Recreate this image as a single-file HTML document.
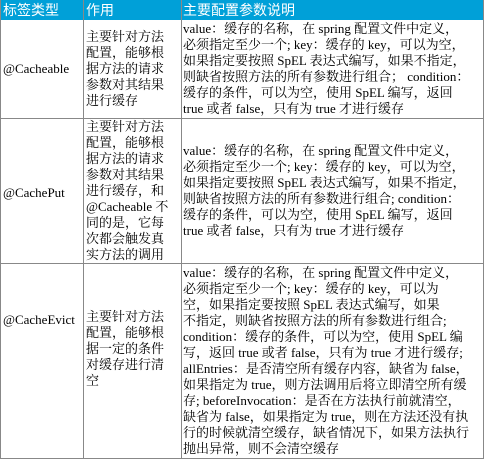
<!DOCTYPE html>
<html><head><meta charset="utf-8"><style>
body{margin:0;width:484px;height:460px;background:#fff;position:relative;overflow:hidden;font-family:"Liberation Serif","Noto Serif CJK SC",serif;font-size:13px;color:#000}
.h{position:absolute;top:0;left:0;width:484px;height:20px;background:#00a0d8}
.ht{position:absolute;top:0;line-height:20px;color:#fff;font-family:"Liberation Sans","Noto Sans CJK SC",sans-serif;font-size:14px}
.v{position:absolute;width:1px;background:#888;top:0;height:459px}
.hl{position:absolute;left:0;width:484px;height:1px;background:#888}
.t{position:absolute;line-height:16px;white-space:nowrap}
</style></head><body>
<div class="h"></div>
<div class="ht" style="left:3px">标签类型</div>
<div class="ht" style="left:86px">作用</div>
<div class="ht" style="left:183px">主要配置参数说明</div>
<div class="v" style="left:0"></div>
<div class="v" style="left:83px"></div>
<div class="v" style="left:181px"></div>
<div class="v" style="left:483px"></div>
<div class="hl" style="top:118px"></div>
<div class="hl" style="top:263px"></div>
<div class="hl" style="top:458px"></div>

<div class="t" style="left:3px;top:61px">@Cacheable</div>
<div class="t" style="left:86px;top:29px">主要针对方法<br>配置，能够根<br>据方法的请求<br>参数对其结果<br>进行缓存</div>
<div class="t" style="left:183px;top:21px">value：缓存的名称，在 spring 配置文件中定义，<br>必须指定至少一个; key：缓存的 key，可以为空，<br>如果指定要按照 SpEL 表达式编写，如果不指定，<br>则缺省按照方法的所有参数进行组合； condition：<br>缓存的条件，可以为空，使用 SpEL 编写，返回<br>true 或者 false，只有为 true 才进行缓存</div>

<div class="t" style="left:3px;top:185px">@CachePut</div>
<div class="t" style="left:86px;top:119px">主要针对方法<br>配置，能够根<br>据方法的请求<br>参数对其结果<br>进行缓存，和<br>@Cacheable 不<br>同的是，它每<br>次都会触发真<br>实方法的调用</div>
<div class="t" style="left:183px;top:143px">value：缓存的名称，在 spring 配置文件中定义，<br>必须指定至少一个; key：缓存的 key，可以为空，<br>如果指定要按照 SpEL 表达式编写，如果不指定，<br>则缺省按照方法的所有参数进行组合; condition：<br>缓存的条件，可以为空，使用 SpEL 编写，返回<br>true 或者 false，只有为 true 才进行缓存</div>

<div class="t" style="left:3px;top:312px">@CacheEvict</div>
<div class="t" style="left:86px;top:309px">主要针对方法<br>配置，能够根<br>据一定的条件<br>对缓存进行清<br>空</div>
<div class="t" style="left:183px;top:265px">value：缓存的名称，在 spring 配置文件中定义，<br>必须指定至少一个; key：缓存的 key，可以为<br>空，如果指定要按照 SpEL 表达式编写，如果<br>不指定，则缺省按照方法的所有参数进行组合;<br>condition：缓存的条件，可以为空，使用 SpEL 编<br>写，返回 true 或者 false，只有为 true 才进行缓存;<br>allEntries：是否清空所有缓存内容，缺省为 false，<br>如果指定为 true，则方法调用后将立即清空所有缓<br>存; beforeInvocation：是否在方法执行前就清空，<br>缺省为 false，如果指定为 true，则在方法还没有执<br>行的时候就清空缓存，缺省情况下，如果方法执行<br>抛出异常，则不会清空缓存</div>
</body></html>
